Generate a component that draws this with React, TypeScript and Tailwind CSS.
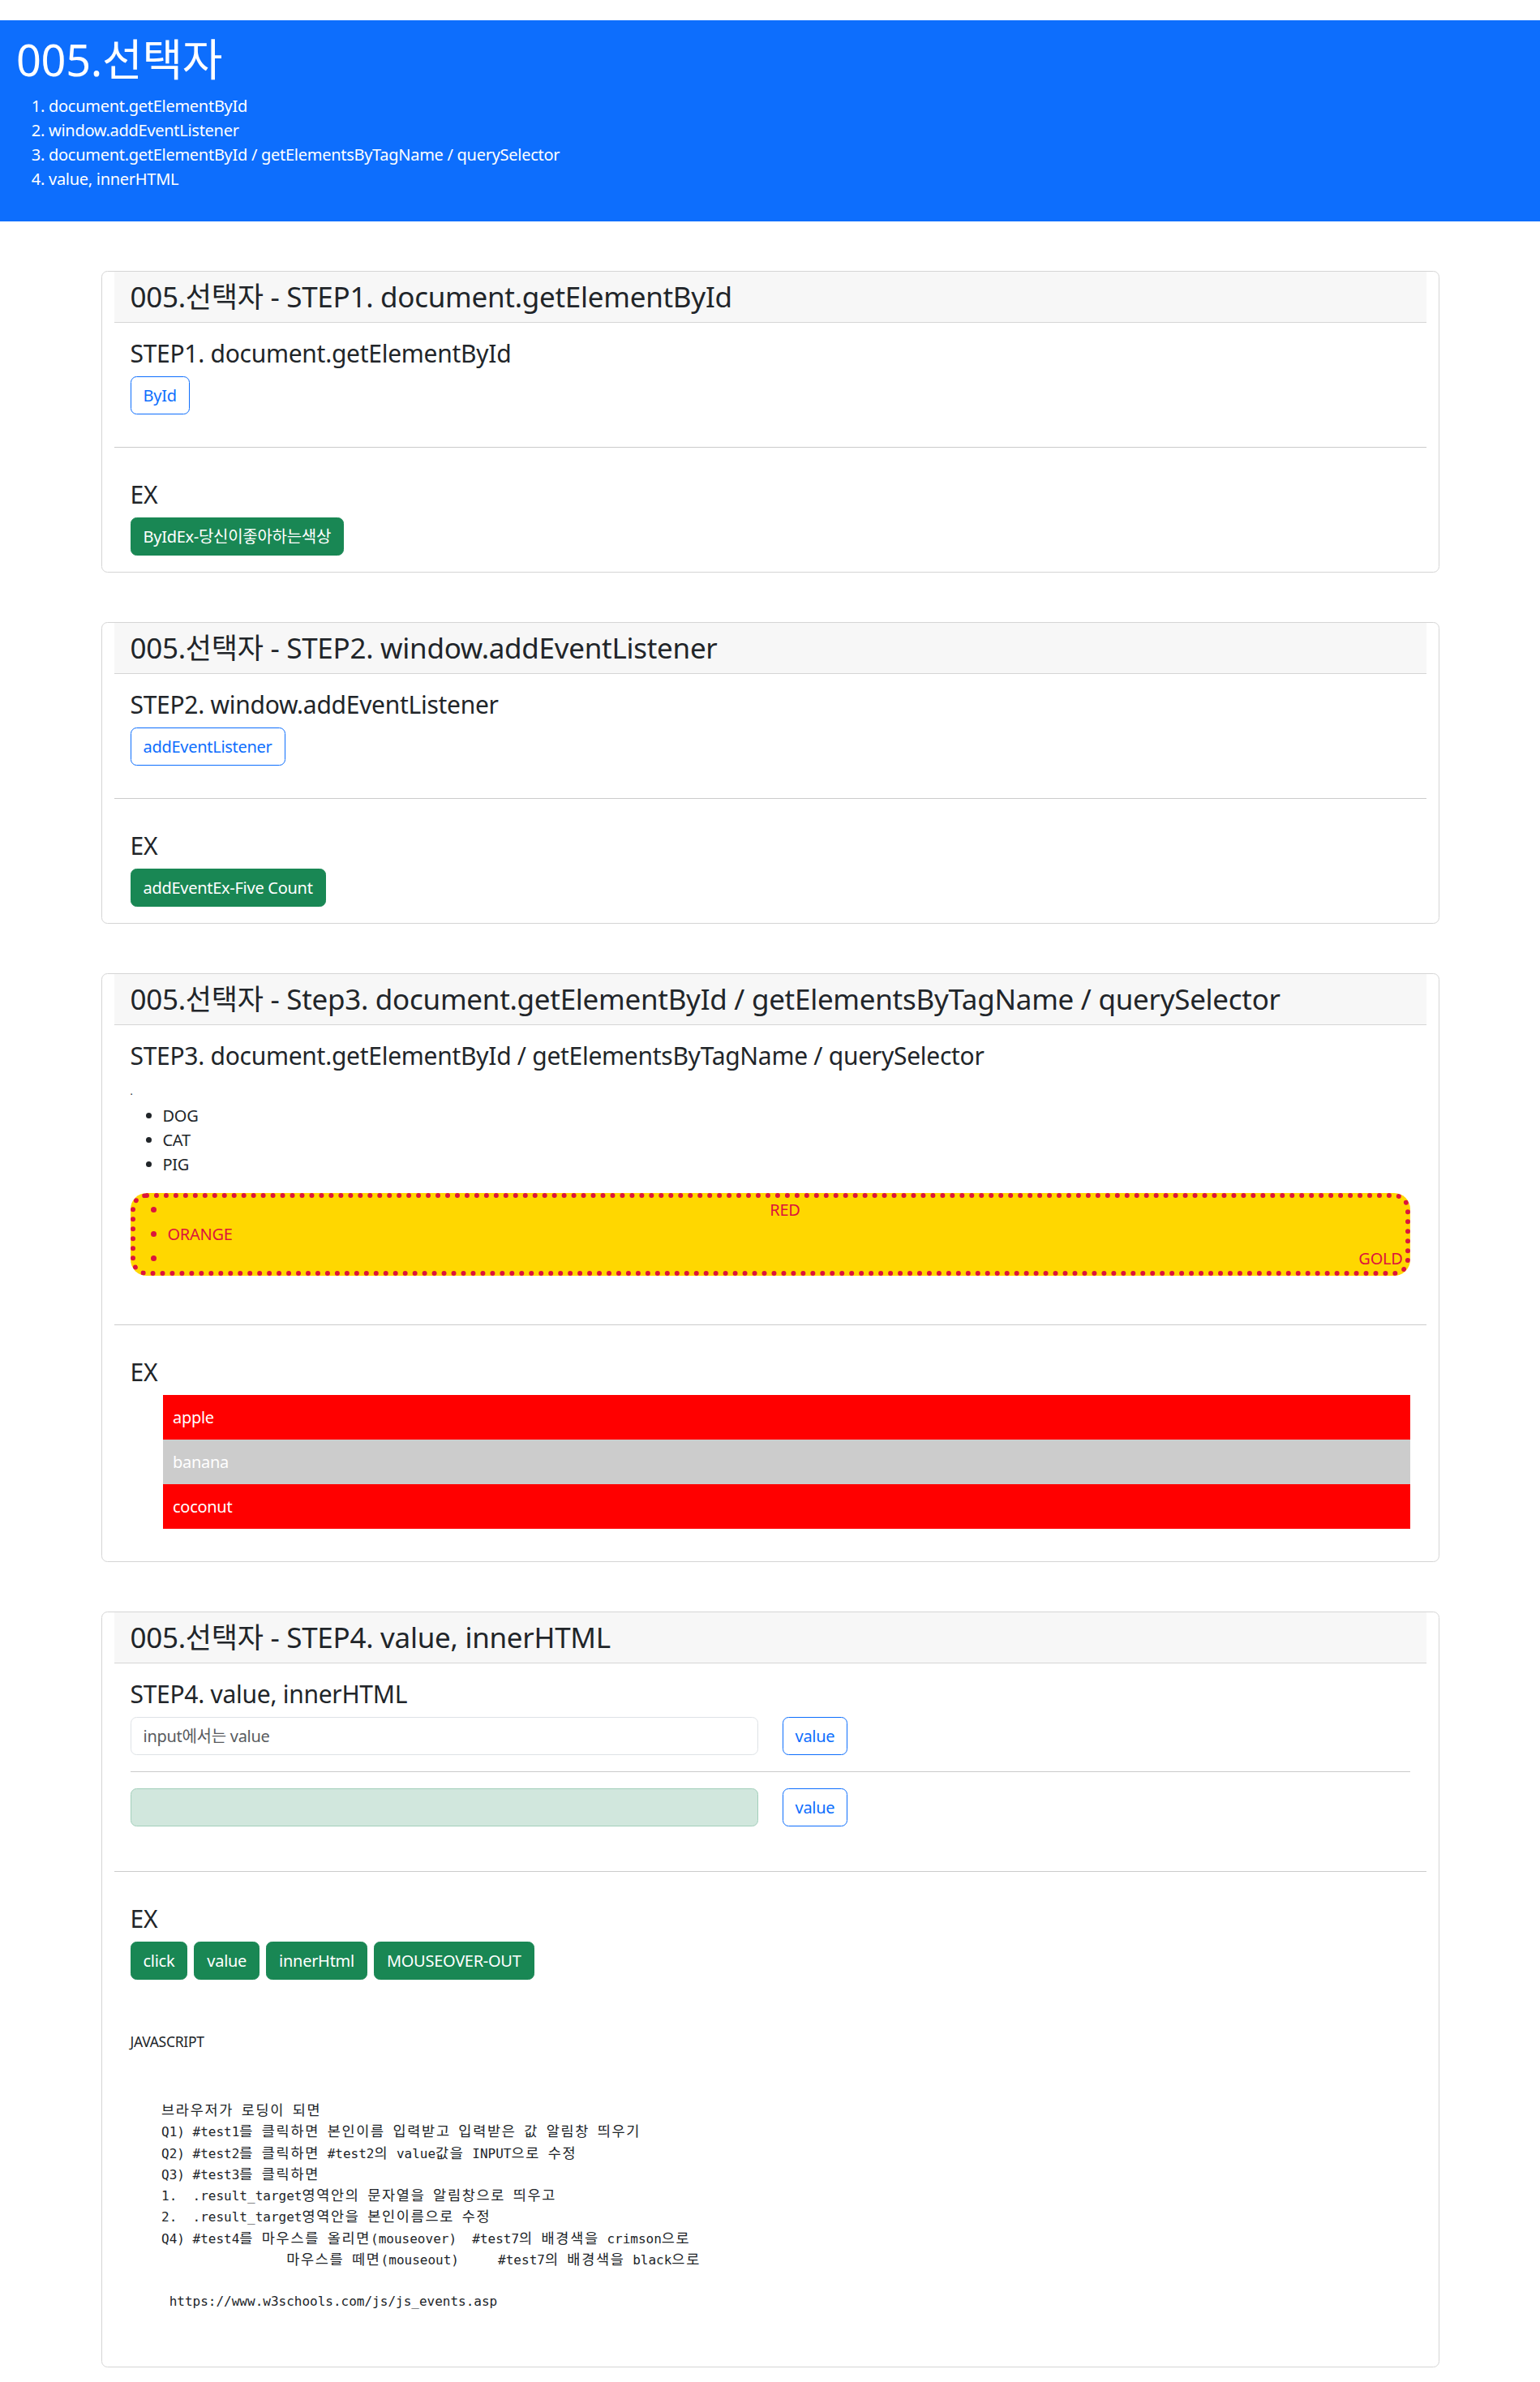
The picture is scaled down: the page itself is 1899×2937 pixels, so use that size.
import React from "react";

const hangul = /([\u3131-\u318E\uAC00-\uD7A3]+)/;

// Korean runs in the code block take two mono cells, like the original font
function CodeLine({ text }: { text: string }) {
  const parts = text.split(hangul);
  return (
    <div className="h-[26.25px] whitespace-pre">
      {parts.map((part, index) =>
        hangul.test(part) ? (
          <span key={index} className="text-[17.5px] tracking-[1.7px]">
            {part}
          </span>
        ) : (
          <React.Fragment key={index}>{part}</React.Fragment>
        )
      )}
    </div>
  );
}

const codeLines = [
  "    브라우저가 로딩이 되면",
  "    Q1) #test1를 클릭하면 본인이름 입력받고 입력받은 값 알림창 띄우기",
  "    Q2) #test2를 클릭하면 #test2의 value값을 INPUT으로 수정",
  "    Q3) #test3를 클릭하면",
  "    1.  .result_target영역안의 문자열을 알림창으로 띄우고",
  "    2.  .result_target영역안을 본인이름으로 수정",
  "    Q4) #test4를 마우스를 올리면(mouseover)  #test7의 배경색을 crimson으로",
  "                    마우스를 떼면(mouseout)     #test7의 배경색을 black으로",
  "",
  "     https://www.w3schools.com/js/js_events.asp",
  "",
];

function OutlineButton({ label }: { label: string }) {
  return (
    <button className="rounded-[7.5px] border border-[#0d6efd] bg-white px-[15px] py-[7.5px] text-[20px] leading-[30px] text-[#0d6efd]">
      {label}
    </button>
  );
}

function GreenButton({ label }: { label: string }) {
  return (
    <button className="rounded-[7.5px] border border-[#198754] bg-[#198754] px-[15px] py-[7.5px] text-[20px] leading-[30px] text-white">
      {label}
    </button>
  );
}

function Card({ title, children }: { title: string; children: React.ReactNode }) {
  return (
    <section className="mx-auto mt-[61px] w-[1650px] rounded-[7.5px] border border-[#d5d5d5] px-[15px]">
      {/* Card header */}
      <div className="border-b border-[#d5d5d5] bg-[#f7f7f7] px-5 py-[10px]">
        <h3 className="text-[35px] leading-[42px] font-normal">{title}</h3>
      </div>
      {children}
    </section>
  );
}

function Divider() {
  return <hr className="my-5 border-t border-[#cbcbcb]" />;
}

function ExBlock({ children }: { children: React.ReactNode }) {
  return (
    <div className="p-5">
      <h4 className="mb-[10px] text-[30px] leading-[36px] font-normal">EX</h4>
      {children}
    </div>
  );
}

export default function App() {
  return (
    <div className="min-h-[2937px] bg-white pt-[25px] font-['Noto_Sans','Noto_Sans_CJK_KR',sans-serif] text-[20px] leading-[30px] tracking-[-0.014em] text-[#212529]">
      {/* Page header */}
      <header className="bg-[#0d6efd] px-5 pt-4 pb-[17px] text-white">
        <h1 className="mb-[10px] text-[54px] leading-[65px] font-normal">005.선택자</h1>
        <ol className="mb-5 list-decimal pl-10">
          <li>document.getElementById</li>
          <li>window.addEventListener</li>
          <li>document.getElementById / getElementsByTagName / querySelector</li>
          <li>value, innerHTML</li>
        </ol>
      </header>

      {/* STEP1 */}
      <Card title="005.선택자 - STEP1. document.getElementById">
        <div className="p-5">
          <h4 className="mb-[10px] text-[30px] leading-[36px] font-normal">STEP1. document.getElementById</h4>
          <OutlineButton label="ById" />
        </div>
        <Divider />
        <ExBlock>
          <GreenButton label="ByIdEx-당신이좋아하는색상" />
        </ExBlock>
      </Card>

      {/* STEP2 */}
      <Card title="005.선택자 - STEP2. window.addEventListener">
        <div className="p-5">
          <h4 className="mb-[10px] text-[30px] leading-[36px] font-normal">STEP2. window.addEventListener</h4>
          <OutlineButton label="addEventListener" />
        </div>
        <Divider />
        <ExBlock>
          <GreenButton label="addEventEx-Five Count" />
        </ExBlock>
      </Card>

      {/* Step3 */}
      <Card title="005.선택자 - Step3. document.getElementById / getElementsByTagName / querySelector">
        <div className="p-5">
          <h4 className="mb-[10px] text-[30px] leading-[36px] font-normal">
            STEP3. document.getElementById / getElementsByTagName / querySelector
          </h4>
          <div className="text-[12px] leading-[31px]">.</div>
          <ul className="mb-5 list-disc pl-10">
            <li>DOG</li>
            <li>CAT</li>
            <li>PIG</li>
          </ul>
          <ul className="mb-5 list-disc rounded-[20px] border-[6px] border-dotted border-[#dc143c] bg-[#ffd700] pr-[3px] pl-10 text-[#dc143c]">
            <li className="text-center">RED</li>
            <li>ORANGE</li>
            <li className="text-right">GOLD</li>
          </ul>
        </div>
        <Divider />
        <ExBlock>
          <ul className="mb-5 pl-10 text-white">
            <li className="bg-[#ff0000] p-[12.5px]">apple</li>
            <li className="bg-[#cccccc] p-[12.5px]">banana</li>
            <li className="bg-[#ff0000] p-[12.5px]">coconut</li>
          </ul>
        </ExBlock>
      </Card>

      {/* STEP4 */}
      <Card title="005.선택자 - STEP4. value, innerHTML">
        <div className="p-5">
          <h4 className="mb-[10px] text-[30px] leading-[36px] font-normal">STEP4. value, innerHTML</h4>
          <div className="grid grid-cols-2 gap-[30px]">
            <input
              placeholder="input에서는 value"
              className="h-[47px] rounded-[7.5px] border border-[#dee2e6] px-[15px] py-[7.5px] placeholder:text-[#595c5f]"
            />
            <div>
              <OutlineButton label="value" />
            </div>
          </div>
          <hr className="my-5 border-t border-[#cbcbcb]" />
          <div className="mb-[15px] grid grid-cols-2 gap-[30px]">
            <input
              readOnly
              className="h-[47px] rounded-[7.5px] border border-[#a3cfbb] bg-[#d1e7dd] px-[15px] py-[7.5px]"
            />
            <div>
              <OutlineButton label="value" />
            </div>
          </div>
        </div>
        <Divider />
        <ExBlock>
          <div className="flex gap-2">
            <GreenButton label="click" />
            <GreenButton label="value" />
            <GreenButton label="innerHtml" />
            <GreenButton label="MOUSEOVER-OUT" />
          </div>
          <p className="mt-[61px] text-[17.5px] leading-[30px]">JAVASCRIPT</p>
          <pre className="mt-[57px] mb-5 font-['DejaVu_Sans_Mono','Noto_Sans_CJK_KR',monospace] text-[16px] leading-[26.25px] tracking-normal">
            {codeLines.map((line, index) => (
              <CodeLine key={index} text={line} />
            ))}
          </pre>
        </ExBlock>
      </Card>
    </div>
  );
}
